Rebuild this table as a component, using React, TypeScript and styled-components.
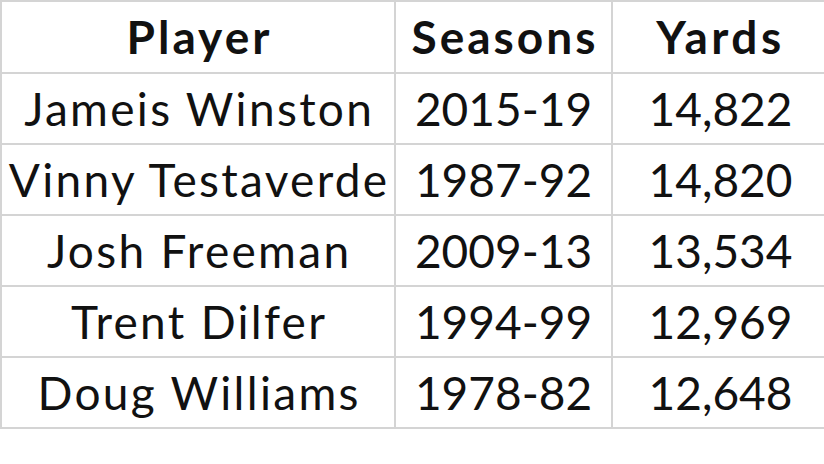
import React from "react";
import styled, { createGlobalStyle } from "styled-components";

const rows = [
  { player: "Jameis Winston", seasons: "2015-19", yards: "14,822" },
  { player: "Vinny Testaverde", seasons: "1987-92", yards: "14,820" },
  { player: "Josh Freeman", seasons: "2009-13", yards: "13,534" },
  { player: "Trent Dilfer", seasons: "1994-99", yards: "12,969" },
  { player: "Doug Williams", seasons: "1978-82", yards: "12,648" },
];

const GlobalStyle = createGlobalStyle`
  html, body {
    margin: 0;
    padding: 0;
    background: #fff;
    overflow: hidden;
  }
  body {
    font-family: Lato, "Open Sans", sans-serif;
    color: #111;
  }
`;

const Page = styled.div`
  width: 824px;
  height: 464px;
  overflow: hidden;
`;

const Table = styled.table`
  border-collapse: collapse;
  table-layout: fixed;
  width: 828px;
`;

const Col = styled.col<{ w: number }>`
  width: ${(p) => p.w}px;
`;

// pad = extra left padding, used to balance the trailing letter-spacing
const Cell = styled.td<{ head?: boolean; spacing?: number; pad?: number }>`
  height: ${(p) => (p.head ? 70 : 69)}px;
  padding: 0 0 0 ${(p) => p.pad ?? p.spacing ?? 0}px;
  border: 2px solid #d4d4d4;
  text-align: center;
  vertical-align: middle;
  white-space: nowrap;
  font-size: 46px;
  font-weight: ${(p) => (p.head ? 700 : 400)};
  letter-spacing: ${(p) => p.spacing || 0}px;
  line-height: 1;
  color: #111;
`;

export default function App() {
  return (
    <Page>
      <GlobalStyle />
      <Table>
        <colgroup>
          <Col w={394} />
          <Col w={217} />
          <Col w={217} />
        </colgroup>
        <thead>
          <tr>
            <Cell as="th" head spacing={3}>Player</Cell>
            <Cell as="th" head spacing={3}>Seasons</Cell>
            <Cell as="th" head spacing={3.5} pad={0}>Yards</Cell>
          </tr>
        </thead>
        <tbody>
          {rows.map((r) => (
            <tr key={r.player}>
              <Cell spacing={2.3}>{r.player}</Cell>
              <Cell>{r.seasons}</Cell>
              <Cell>{r.yards}</Cell>
            </tr>
          ))}
        </tbody>
      </Table>
    </Page>
  );
}
